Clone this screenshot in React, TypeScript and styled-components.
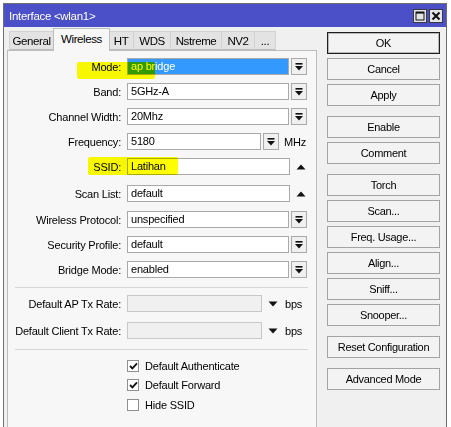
import React from "react"
import styled, { createGlobalStyle } from "styled-components"

const GlobalStyle = createGlobalStyle`
  html, body {
    margin: 0;
    padding: 0;
    background: #ffffff;
    overflow: hidden;
  }
  body {
    font-family: "Liberation Sans", Arial, sans-serif;
    font-size: 11px;
    letter-spacing: -0.2px;
    color: #000;
  }
`

const Page = styled.div`
  position: relative;
  width: 451px;
  height: 427px;
  padding: 3px 0 0 3px;
  box-sizing: border-box;
`

const Window = styled.div`
  width: 444px;
  height: 440px;
  box-sizing: border-box;
  border: 1px solid #6f6f6f;
  border-bottom: none;
  background: #f0f0f0;
  display: flex;
  flex-direction: column;
`

const TitleBar = styled.div`
  height: 23px;
  flex: none;
  display: flex;
  align-items: center;
  padding: 0 3px 0 5px;
  background: #4b50c9;
  color: #ffffff;
`

const Title = styled.div`
  flex: 1;
  font-size: 11.5px;
  letter-spacing: -0.3px;
`

const TitleButton = styled.div`
  width: 14px;
  height: 14px;
  margin-left: 2px;
  margin-top: 1px;
  box-sizing: border-box;
  border: 1px solid #3a3a3a;
  background: #e6e6e6;
  display: flex;
  align-items: center;
  justify-content: center;
`

const Body = styled.div`
  flex: 1;
  display: flex;
`

const LeftPane = styled.div`
  width: 313px;
  padding-left: 3px;
  box-sizing: border-box;
  display: flex;
  flex-direction: column;
`

const TabStrip = styled.div`
  height: 23px;
  flex: none;
  display: flex;
  align-items: flex-end;
  padding-left: 2px;
`

const Tab = styled.div<{ $active?: boolean; $width: number }>`
  position: relative;
  box-sizing: border-box;
  width: ${({ $width }) => $width}px;
  height: ${({ $active }) => ($active ? "23px" : "19px")};
  margin: ${({ $active }) => ($active ? "0 -1px -1px -1px" : "0")};
  padding-bottom: ${({ $active }) => ($active ? "3px" : "0")};
  display: flex;
  align-items: center;
  justify-content: center;
  border: 1px solid ${({ $active }) => ($active ? "#bdbdbd" : "#d2d2d2")};
  border-bottom: ${({ $active }) => ($active ? "none" : "1px solid #bdbdbd")};
  border-left-width: ${({ $active }) => ($active ? "1px" : "0")};
  background: ${({ $active }) => ($active ? "#f7f7f7" : "#e3e3e3")};
  z-index: ${({ $active }) => ($active ? 1 : 0)};
  font-size: 11.5px;
  letter-spacing: -0.4px;
  white-space: nowrap;
  &:first-child {
    border-left-width: 1px;
  }
`

const Panel = styled.div`
  flex: 1;
  border: 1px solid #bdbdbd;
  border-bottom: none;
  background: #f7f7f7;
  padding-top: 7px;
  display: flex;
  flex-direction: column;
`

const Row = styled.div<{ $gap?: number }>`
  display: flex;
  align-items: center;
  height: 17px;
  margin-top: ${({ $gap }) => $gap ?? 8}px;
  &:first-child {
    margin-top: 0;
  }
`

const Label = styled.div`
  width: 113px;
  flex: none;
  text-align: right;
  white-space: nowrap;
`

const Field = styled.div<{ $width: number; $selected?: boolean; $disabled?: boolean }>`
  width: ${({ $width }) => $width}px;
  height: 17px;
  margin-left: 6px;
  box-sizing: border-box;
  padding-left: 3px;
  line-height: 15px;
  white-space: nowrap;
  border: 1px solid ${({ $disabled }) => ($disabled ? "#c8c8c8" : "#a9a9a9")};
  background: ${({ $selected, $disabled }) =>
    $selected ? "#3399ff" : $disabled ? "#f0f0f0" : "#ffffff"};
  color: ${({ $selected }) => ($selected ? "#ffffff" : "#000")};
`

const DropButton = styled.div`
  width: 16px;
  height: 17px;
  margin-left: 2px;
  box-sizing: border-box;
  border: 1px solid #a9a9a9;
  background: #f0f0f0;
  display: flex;
  align-items: center;
  justify-content: center;
`

const ArrowMark = styled.div<{ $offset: number }>`
  margin-left: ${({ $offset }) => $offset}px;
  display: flex;
  align-items: center;
`

const Unit = styled.div<{ $offset: number }>`
  margin-left: ${({ $offset }) => $offset}px;
`

const Separator = styled.div<{ $top: number }>`
  height: 1px;
  flex: none;
  margin: ${({ $top }) => $top}px 8px 0 7px;
  background: #d6d6d6;
`

const CheckList = styled.div`
  margin-top: 6px;
  padding-left: 119px;
  display: flex;
  flex-direction: column;
`

const CheckRow = styled.div`
  height: 19.5px;
  display: flex;
  align-items: center;
`

const CheckBox = styled.div`
  width: 12px;
  height: 12px;
  box-sizing: border-box;
  border: 1px solid #8f8f8f;
  background: #ffffff;
  display: flex;
  align-items: center;
  justify-content: center;
  margin-right: 6px;
`

const RightPane = styled.div`
  width: 113px;
  margin-left: 10px;
  padding-top: 5px;
  display: flex;
  flex-direction: column;
  gap: 10px;
`

const ButtonGroup = styled.div`
  display: flex;
  flex-direction: column;
  gap: 4px;
`

const ActionButton = styled.div<{ $default?: boolean }>`
  height: 22px;
  box-sizing: border-box;
  border: 1px solid ${({ $default }) => ($default ? "#1e1e1e" : "#a3a3a3")};
  box-shadow: ${({ $default }) => ($default ? "inset 0 0 0 1px #b8b8b8" : "none")};
  background: #f3f3f3;
  display: flex;
  align-items: center;
  justify-content: center;
  white-space: nowrap;
  letter-spacing: -0.3px;
`

const Highlight = styled.div<{ $x: number; $y: number; $w: number; $h: number }>`
  position: absolute;
  left: ${({ $x }) => $x}px;
  top: ${({ $y }) => $y}px;
  width: ${({ $w }) => $w}px;
  height: ${({ $h }) => $h}px;
  background: #ffff00;
  mix-blend-mode: multiply;
  border-radius: 2px;
  pointer-events: none;
`

const DropIcon = () => (
  <svg width="10" height="10" viewBox="0 0 10 10">
    <rect x="1.5" y="1" width="7" height="1.6" fill="#111" />
    <polygon points="1,4 9,4 5,8.5" fill="#111" />
  </svg>
)

const UpIcon = () => (
  <svg width="10" height="6" viewBox="0 0 10 6">
    <polygon points="0.5,5.5 9.5,5.5 5,0.5" fill="#111" />
  </svg>
)

const DownIcon = () => (
  <svg width="10" height="6" viewBox="0 0 10 6">
    <polygon points="0.5,0.5 9.5,0.5 5,5.5" fill="#111" />
  </svg>
)

const CheckIcon = () => (
  <svg width="9" height="8" viewBox="0 0 9 8">
    <polyline points="1,4 3.4,6.4 8,1.4" fill="none" stroke="#111" strokeWidth="1.8" />
  </svg>
)

const tabs = [
  { name: "General", width: 45 },
  { name: "Wireless", width: 57 },
  { name: "HT", width: 25 },
  { name: "WDS", width: 37 },
  { name: "Nstreme", width: 51 },
  { name: "NV2", width: 33 },
  { name: "...", width: 21 },
]

const buttonGroups = [
  ["OK", "Cancel", "Apply"],
  ["Enable", "Comment"],
  ["Torch", "Scan...", "Freq. Usage...", "Align...", "Sniff...", "Snooper..."],
  ["Reset Configuration"],
  ["Advanced Mode"],
]

export default function App() {
  return (
    <>
      <GlobalStyle />
      <Page>
        <Window>
          <TitleBar>
            <Title>Interface &lt;wlan1&gt;</Title>
            <TitleButton>
              <svg width="10" height="10" viewBox="0 0 10 10">
                <rect x="1" y="1" width="8" height="8" fill="none" stroke="#111" strokeWidth="1" />
                <rect x="1" y="1" width="8" height="1.6" fill="#111" />
              </svg>
            </TitleButton>
            <TitleButton>
              <svg width="10" height="10" viewBox="0 0 10 10">
                <path d="M1.5 1.5 L8.5 8.5 M8.5 1.5 L1.5 8.5" stroke="#111" strokeWidth="2" />
              </svg>
            </TitleButton>
          </TitleBar>
          <Body>
            <LeftPane>
              <TabStrip>
                {tabs.map((t) => (
                  <Tab key={t.name} $width={t.width} $active={t.name === "Wireless"}>
                    {t.name}
                  </Tab>
                ))}
              </TabStrip>
              <Panel>
                <Row>
                  <Label>Mode:</Label>
                  <Field $width={162} $selected>ap bridge</Field>
                  <DropButton><DropIcon /></DropButton>
                </Row>
                <Row>
                  <Label>Band:</Label>
                  <Field $width={162}>5GHz-A</Field>
                  <DropButton><DropIcon /></DropButton>
                </Row>
                <Row>
                  <Label>Channel Width:</Label>
                  <Field $width={162}>20Mhz</Field>
                  <DropButton><DropIcon /></DropButton>
                </Row>
                <Row>
                  <Label>Frequency:</Label>
                  <Field $width={134}>5180</Field>
                  <DropButton><DropIcon /></DropButton>
                  <Unit $offset={5}>MHz</Unit>
                </Row>
                <Row>
                  <Label>SSID:</Label>
                  <Field $width={163}>Latihan</Field>
                  <ArrowMark $offset={6}><UpIcon /></ArrowMark>
                </Row>
                <Row $gap={10}>
                  <Label>Scan List:</Label>
                  <Field $width={163}>default</Field>
                  <ArrowMark $offset={6}><UpIcon /></ArrowMark>
                </Row>
                <Row $gap={9}>
                  <Label>Wireless Protocol:</Label>
                  <Field $width={162}>unspecified</Field>
                  <DropButton><DropIcon /></DropButton>
                </Row>
                <Row>
                  <Label>Security Profile:</Label>
                  <Field $width={162}>default</Field>
                  <DropButton><DropIcon /></DropButton>
                </Row>
                <Row>
                  <Label>Bridge Mode:</Label>
                  <Field $width={162}>enabled</Field>
                  <DropButton><DropIcon /></DropButton>
                </Row>

                <Separator $top={9} />

                <Row $gap={7}>
                  <Label>Default AP Tx Rate:</Label>
                  <Field $width={135} $disabled />
                  <ArrowMark $offset={6}><DownIcon /></ArrowMark>
                  <Unit $offset={7}>bps</Unit>
                </Row>
                <Row $gap={10}>
                  <Label>Default Client Tx Rate:</Label>
                  <Field $width={135} $disabled />
                  <ArrowMark $offset={6}><DownIcon /></ArrowMark>
                  <Unit $offset={7}>bps</Unit>
                </Row>

                <Separator $top={10} />

                <CheckList>
                  <CheckRow>
                    <CheckBox><CheckIcon /></CheckBox>
                    Default Authenticate
                  </CheckRow>
                  <CheckRow>
                    <CheckBox><CheckIcon /></CheckBox>
                    Default Forward
                  </CheckRow>
                  <CheckRow>
                    <CheckBox />
                    Hide SSID
                  </CheckRow>
                </CheckList>
              </Panel>
            </LeftPane>
            <RightPane>
              {buttonGroups.map((group, gi) => (
                <ButtonGroup key={gi}>
                  {group.map((b) => (
                    <ActionButton key={b} $default={b === "OK"}>
                      {b}
                    </ActionButton>
                  ))}
                </ButtonGroup>
              ))}
            </RightPane>
          </Body>
        </Window>
        <Highlight $x={77} $y={62} $w={78} $h={17} />
        <Highlight $x={88} $y={157} $w={90} $h={18} />
      </Page>
    </>
  )
}
